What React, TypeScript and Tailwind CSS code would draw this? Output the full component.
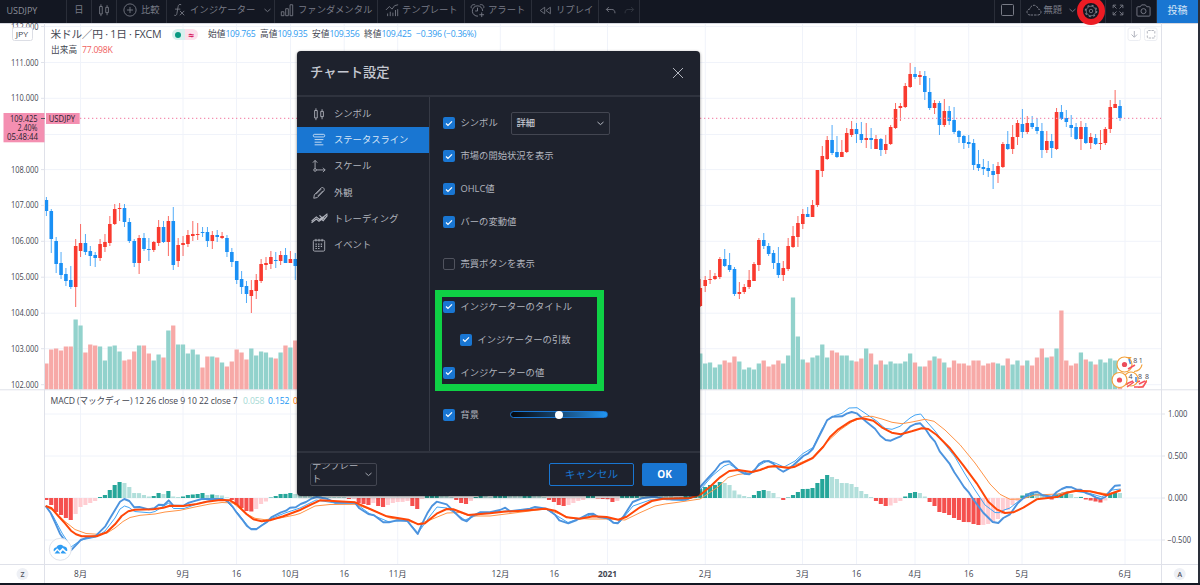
import React from "react";
import clsx from "clsx";

type Candle = [high: number, top: number, bottom: number, low: number, up: 0 | 1];

const STEP = 4.88;
const FIRST_X = 46.4;
const ZERO_Y = 498;
const VOLUME_BASE = 389.5;
const barX = (i: number) => FIRST_X + i * STEP;

const candlesLeft: Candle[] = [
  [197, 200, 211, 216, 0], [209, 211, 239, 253, 0], [237, 241, 264, 273, 0], [252, 263, 275, 279, 0],
  [268, 274, 281, 286, 0], [266, 280, 287, 289, 0], [239, 246, 287, 307, 1], [224, 243, 251, 257, 1],
  [234, 243, 252, 255, 0], [246, 251, 256, 266, 0], [252, 255, 258, 267, 0], [239, 244, 258, 261, 1],
  [234, 242, 247, 252, 1], [216, 224, 243, 246, 1], [204, 209, 224, 225, 1], [203, 208, 209, 221, 1],
  [204, 208, 222, 227, 0], [218, 222, 241, 243, 0], [239, 241, 263, 267, 0], [235, 238, 263, 274, 1],
  [233, 238, 249, 251, 0], [238, 249, 250, 261, 0], [241, 242, 250, 252, 1], [220, 227, 243, 246, 1],
  [221, 227, 242, 243, 0], [216, 221, 242, 256, 1], [207, 221, 265, 270, 0], [238, 245, 261, 267, 1],
  [236, 243, 245, 256, 1], [230, 235, 244, 247, 1], [221, 234, 236, 241, 1], [223, 234, 235, 240, 1],
  [227, 232, 233, 237, 0], [227, 232, 241, 247, 0], [231, 235, 241, 249, 1], [230, 235, 237, 242, 0],
  [232, 236, 238, 239, 1], [235, 238, 252, 257, 0], [248, 252, 262, 267, 0], [261, 261, 280, 284, 0],
  [271, 279, 287, 294, 0], [281, 286, 294, 303, 0], [280, 290, 296, 313, 1], [274, 280, 291, 299, 1],
  [259, 264, 281, 283, 1], [257, 263, 265, 270, 1], [251, 257, 264, 269, 1], [252, 260, 261, 268, 0],
  [251, 255, 261, 265, 1], [248, 255, 263, 263, 0], [251, 259, 263, 263, 1], [253, 259, 266, 280, 0],
];

const candlesRight: Candle[] = [
  [279, 288, 306, 307, 1], [276, 280, 286, 292, 1], [270, 279, 280, 284, 1], [273, 276, 279, 280, 1],
  [257, 259, 277, 279, 1], [249, 259, 266, 267, 0], [253, 265, 270, 272, 0], [267, 269, 294, 296, 0],
  [282, 292, 294, 299, 1], [284, 287, 292, 294, 1], [270, 280, 287, 289, 1], [262, 264, 281, 281, 1],
  [238, 240, 265, 271, 1], [233, 240, 246, 249, 0], [243, 246, 254, 256, 0], [250, 253, 263, 269, 0],
  [247, 263, 275, 278, 0], [261, 268, 275, 281, 1], [238, 246, 269, 271, 1], [226, 236, 247, 248, 1],
  [216, 223, 237, 247, 1], [209, 214, 224, 229, 1], [207, 214, 217, 217, 0], [200, 205, 217, 217, 1],
  [170, 170, 205, 207, 1], [146, 156, 171, 177, 1], [136, 140, 159, 160, 1], [125, 140, 153, 155, 0],
  [136, 152, 157, 158, 0], [140, 152, 157, 157, 1], [128, 133, 152, 153, 1], [121, 129, 135, 137, 1],
  [123, 129, 134, 143, 0], [122, 134, 140, 143, 0], [123, 138, 140, 148, 1], [128, 138, 140, 149, 0],
  [135, 139, 149, 149, 1], [138, 139, 150, 156, 0], [135, 144, 150, 154, 1], [125, 127, 144, 145, 1],
  [103, 109, 128, 129, 1], [103, 106, 108, 121, 1], [83, 86, 107, 108, 1], [63, 74, 87, 88, 1],
  [67, 74, 77, 79, 0], [71, 75, 77, 85, 1], [71, 76, 92, 100, 0], [78, 92, 108, 110, 0],
  [100, 103, 108, 114, 1], [101, 103, 125, 135, 0], [99, 111, 125, 127, 1], [106, 111, 121, 125, 0],
  [107, 120, 132, 134, 0], [130, 131, 137, 143, 0], [135, 136, 143, 149, 0], [135, 142, 144, 148, 0],
  [139, 143, 165, 170, 0], [150, 164, 168, 171, 0], [159, 167, 169, 175, 0], [161, 168, 171, 177, 0],
  [164, 171, 175, 189, 0], [162, 166, 174, 183, 1], [142, 144, 167, 168, 1], [131, 144, 149, 150, 0],
  [125, 137, 149, 154, 1], [120, 123, 137, 145, 1], [109, 124, 132, 138, 0], [116, 123, 132, 134, 1],
  [116, 123, 127, 129, 0], [118, 127, 131, 134, 0], [123, 131, 150, 158, 0], [131, 141, 150, 153, 1],
  [134, 141, 148, 158, 0], [108, 112, 149, 150, 1], [105, 112, 119, 120, 0], [110, 118, 122, 127, 0],
  [115, 125, 128, 137, 0], [123, 127, 139, 140, 0], [121, 127, 139, 150, 1], [123, 127, 143, 144, 0],
  [133, 137, 143, 149, 1], [134, 138, 144, 145, 0], [130, 143, 144, 150, 1], [127, 129, 143, 145, 1],
  [100, 107, 129, 133, 1], [90, 104, 108, 108, 1], [100, 106, 118, 121, 0],
];

// g = rising volume, r = falling volume
const volumeLeft = {
  start: 0,
  colors: "rrrrrrggrrrgggggrrrgrrggrgrgggggrrgrgrrrrrgggggrgrgr",
  heights: [
    26, 40, 41, 39, 43, 43, 70, 64, 37, 45, 44, 43, 29, 43, 44, 38, 29, 30, 38, 44, 44, 36, 29, 35, 32, 59, 64, 45,
    45, 36, 40, 35, 22, 33, 33, 32, 27, 23, 28, 40, 37, 30, 41, 34, 38, 37, 32, 31, 37, 44, 42, 49,
  ],
};
const volumeRight = {
  start: 134,
  colors: "gggggrrrgggggrrrrgggggrggggrrgggrrgrgrggggggrgrrgrgrrrrrrrrrrggrggrgrrrgrgrrrrgrgrggggr",
  heights: [
    36, 26, 27, 22, 25, 29, 27, 33, 28, 20, 22, 20, 26, 29, 23, 25, 29, 26, 34, 92, 53, 30, 27, 32, 34, 45, 32, 39,
    37, 34, 34, 29, 28, 31, 41, 36, 25, 29, 25, 28, 26, 26, 28, 36, 27, 23, 23, 29, 33, 31, 27, 22, 29, 26, 26, 24,
    29, 29, 24, 26, 27, 26, 24, 31, 25, 29, 24, 29, 24, 32, 41, 32, 33, 41, 79, 29, 24, 26, 37, 30, 28, 25, 30, 27,
    31, 29, 4,
  ],
};

// MACD histogram, signed height in pixels
const histogram = [
  -2, -7, -14, -17, -20, -22, -16, -9, -7, -5, -3, 1, 3, 8, 13, 16, 15, 11, 5, 4.9, 3, 1.5, 2, 5, 4, 7, 1.5, 1, 1.5,
  3, 3.5, 4, 5, 3, 3.5, 3, 2.5, 0.5, -2, -7, -10, -13, -13.5, -11, -6, -3.5, 0.5, 2, 4, 4.1, 5, 4, 4, 3, 3, 3, 2, 1,
  1, 1, 1, 1, -1, -1, -5, -6, -7, -5, -8, -9, -7, -5, -4, -3.9, -3, -8, -11, -1, 3, 5, 6, 4, 3, 1, -2, -5, -6, -3,
  1, 2, 2, 1, 2, 3, 4, 3, 2, 2, 3, 4, 3, 2, 1, -2, -4, -7, -8, -7, -5, -3, -2, 2, 3, -0.5, -1, -1.2, -4, -3, 2, 4,
  6, 8, 8, 7, 6, 5, 4, 3, 2, 1, 1, 2, 4, 6, 9, 11, 13, 13.1, 16, 15, 13, 7.5, 3.5, 2, 1, 3, 7, 8, 7, 5, 0.5, -2,
  0.5, 3, 6, 9, 9.1, 10, 15, 19, 23, 21, 19, 15, 14.9, 14, 11, 7, 4, 1, -3, -6, -8, -7.5, -5, -3, 1.5, 5, 6, 5, 1.5,
  -4, -8, -14, -15, -17, -20, -22, -24, -24.1, -26, -27, -26.9, -26, -24, -21, -16, -12, -7, -3, 2.5, 4.5, 5.5, 5,
  3.5, 1, -1.5, 3.5, 4, 5, 4, 1, 1.1, -1.5, -2.5, -3.5, -4.5, -2.5, 4, 5.5, 5,
];

const fastLine =
  "45.7,506 50.7,513 55,522.3 60,533.7 65.7,541.7 71,550.3 80.7,540 85,538.3 95.7,536 100,531.7 105.3,526.3 110,518.3 115,510 120,501.7 124.3,499 129.3,501 134.3,507.3 139.3,507 148.7,509.3 154.3,508.3 158.7,504.7 164,505 168.7,500.3 173.3,505.7 183.3,505.7 188,503 193.3,501.3 201.7,499 213.3,499 222.7,499 228,501.7 232.3,506.3 236.7,512.7 242,519.3 246.7,525.7 251.3,529.3 256.3,529.3 261.3,525.7 266.7,522.3 271.7,517 281,512.3 286,510.7 290,507.7 295.7,507.3 300.7,504 306,502 311.7,498.5 316.7,497 326.7,498.7 335,502.7 355,502.7 359.3,508.3 368.3,514 374,515.3 383.3,522.3 389,522.3 396.7,520.3 407.3,521 412.7,527.7 417.7,534 422.3,523.3 427.3,513.3 432,506 436.7,501.7 446.7,504.3 452.3,510 461.7,519.3 466.7,521.3 472.3,516 480,512.3 490,512.3 500,510 505.3,507.7 510,511.3 530,508.7 535,507 546.7,508.7 555,514.7 559.3,520.3 568.3,523.3 576.7,520 588.3,514 593.3,513.7 598.3,517 608.3,518.3 613.3,522.7 617.7,523.3 623.3,516.7 632.7,502 641.7,498.3 653.3,496.7 666.7,499.3 686.7,499.3 695,495 701,486 710,476 715,470.7 720,464 724.3,461.7 729.3,461.3 734.7,466.7 739.3,471 744.3,473.7 749.3,474.3 754,471 759,464 763.7,461.3 769,461.3 773.3,463.7 778.3,468.7 783.3,471.7 788.3,469 793.3,465.3 803.3,456 808.3,453.3 812.7,449 817.7,439 822.7,429.3 827,420.3 832.3,416.7 842,416.3 846.7,413.7 851.7,412 856.7,413.3 866.3,421.7 875,428.7 880.3,435.7 885.7,440 890.7,440.7 895.7,438.3 900.7,436.3 910.3,426.3 915.3,424 920.3,423.3 925,428.3 930,436 935,441.7 939.7,451.3 949.3,463.3 954.3,472.3 959,479.3 964,487 969,492.7 973.7,500 983.3,512.7 992.7,522 998.3,523 1003.3,518 1010,514.3 1017.7,503.3 1026.7,495 1031.7,492.7 1037.3,491.7 1042.7,495.3 1052.3,496.7 1056.7,492 1061.7,489 1066.7,487 1071.7,487.3 1076.7,489.7 1081,489.7 1086,493 1090.7,494.7 1095.7,497.3 1100.7,499 1105.3,497 1110,491 1115,485.7 1120.7,485.3";
const signalLine =
  "45.7,506 51.7,508.3 58.3,516 65,523.3 71,530.7 76,534.3 81.7,536.3 96.7,536.3 106.7,532.3 115,524.3 121.7,516 128.3,511.3 135,509.7 153.3,509.3 163.3,507.7 170,505.7 183.3,506 196.7,504 206.7,501.7 220,500 230,500.3 236.7,504.3 246.7,514.3 253.3,519.3 261.7,521.3 270,520.3 283.3,516.3 300,510 310,505 320,500.3 333.3,501 355,502.3 370,509 386.7,516.3 408.3,519.7 418.3,524.3 425,523.3 436.7,513.7 446.7,509 453.3,509.3 468.3,515 490,513.3 503.3,511.7 523.3,510.7 545,508.7 555,510.7 566.7,517.3 580,518.7 593.3,516.3 606.7,517 618.3,519.7 626.7,516.7 640,507.3 651.7,501 663.3,498.7 690,498 701,494.3 710,486.7 720,477.3 729.3,471 738.3,470 751.7,472 760,470 768.3,466.7 775,466 788.3,468 795,466.7 812.7,458 823.3,446.7 830,437 838.3,429.3 850,421.7 856.7,419 862.7,418.3 873.3,420.7 881.7,427.3 891.7,432.7 900.7,434.3 911.7,431.3 921.7,428.3 928.3,429 936.7,435 950,448.3 963.3,465.3 976.7,483.3 988.3,501.7 996.7,509.3 1005,513 1013.3,512.3 1023.3,507.7 1036.7,499.3 1050,497.7 1058.3,496.7 1066.7,492.7 1076.7,490.7 1090,491.3 1106.7,495.3 1120.7,490.3";
const thinFastLine =
  "45.7,506 53,516 62,533 71,547 81,540 96,537 105,531 115,518 120,509 124.5,506 129,507.5 134.5,511.5 150,512.8 155,511.5 162,507 168.7,503 173.5,508.5 184,508.5 200,503 212,500 225,500 237,512 250,528.5 257,528.5 270,519 285,513 300,508 316,500 335,503 355,503 370,514 388,521.5 407,520.5 418,533 430,516 437,507 447,508 465,520 480,514 505,511 520,510.5 545,508.5 568,522.5 590,515 605,518 615,523 620,522 633,506 650,500 666.7,499 672,500 685,500.7 696,496 701,489 712,476 724,466 729.3,464 740,471 749,473.5 760,465 768,460.5 775,463 784,467 795,461 803,453.5 813,447.5 822,429 827,420.5 835,415.5 842,413.3 849,408 857,407.7 867,414.5 877,421.3 885,428.3 892,429.3 900,426.3 910,418 915,415 920.7,414 927,422 935,431 944,443 955,457 965,474 975,490 985,505 995,512.5 999,512.7 1004,510 1010,508 1020,500 1033,494 1050,497 1062,493 1073,491 1090,493.5 1102,497 1112,490 1120.7,489";
const thinSignalLine =
  "45.7,506 55,512 65,521.5 75,529.5 86,533.5 98,534.3 107,533 115,528 123,521.5 130,517.5 140,515.3 155,514 165,512 180,510.3 195,507 210,504 222,502.5 233,503 245,513 255,518.3 265,519.7 280,518 295,515 300,513.5 315,506 330,504.5 355,504.3 375,511 390,518 408,521 418,524 430,520 447,513 460,512.5 470,516 490,516 510,513.5 545,509 560,514 570,518 590,519 610,519 625,520 640,512.7 655,506 665,504 675,502.7 690,500.5 700,499 706,495 718,487 728,477.5 738,474.5 752,472.7 770,467 790,467 812,458 826,443 840,430 852,421.7 864,416.7 872,416.3 882,419 892,422.3 902,423.7 912,422 925,419.3 934,421.3 945,430 960,444.7 975,463 990,484 1000,494.3 1010,499.3 1022,499 1035,495 1058,494 1075,490.3 1095,492 1108,494 1120.7,490";

const priceTicks: [string, number][] = [
  ["112.000", 26.5], ["111.000", 62.5], ["110.000", 98.3], ["", 134.5], ["108.000", 169.6], ["107.000", 205.4],
  ["106.000", 241.3], ["105.000", 277.2], ["104.000", 313.2], ["103.000", 348.7], ["102.000", 384.7],
];
const macdTicks: [string, number][] = [["1.000", 414], ["0.500", 456], ["0.000", 498], ["−0.500", 540]];
const timeTicks: [string, number][] = [
  ["8月", 80.5], ["9月", 183], ["16", 236.5], ["10月", 290.5], ["16", 344.2], ["11月", 397.7], ["12月", 500.3],
  ["16", 554.2], ["2021", 607.5], ["2月", 705.3], ["3月", 802.5], ["16", 856.5], ["4月", 915], ["16", 968.7],
  ["5月", 1022], ["6月", 1125],
];

function Candles({ data, start }: { data: Candle[]; start: number }) {
  return (
    <g>
      {data.map(([high, top, bottom, low, up], i) => {
        const x = barX(start + i);
        return (
          <g key={i} fill={up ? "#f93a2f" : "#1a90f5"}>
            <rect x={x - 0.5} y={high} width={1} height={low - high} opacity={0.75} />
            <rect x={x - 1.8} y={top} width={3.6} height={Math.max(1, bottom - top)} />
          </g>
        );
      })}
    </g>
  );
}

function Volume({ start, colors, heights }: { start: number; colors: string; heights: number[] }) {
  return (
    <g>
      {heights.map((h, i) => (
        <rect
          key={i}
          x={barX(start + i) - 2.2}
          y={VOLUME_BASE - h}
          width={4.3}
          height={h}
          fill={colors[i] === "g" ? "#92d2cc" : "#f7a9a7"}
        />
      ))}
    </g>
  );
}

function histColor(value: number, previous: number) {
  if (value >= 0) return value > previous ? "#26a69a" : "#b2dfdb";
  return value < previous ? "#f5504e" : "#ffcdd2";
}

function Chart() {
  return (
    <svg
      width="1200"
      height="562"
      viewBox="0 23 1200 562"
      className="block font-['Open_Sans','Noto_Sans_CJK_JP',sans-serif]"
    >
      <rect x="0" y="23" width="1200" height="562" fill="#fff" />
      <rect x="0" y="23" width="1200" height="1" fill="#d6d8e0" />
      <g stroke="#f0f3fa" strokeWidth="1">
        {timeTicks.map(([, x], i) => (
          <line key={i} x1={x} x2={x} y1="24" y2="564" />
        ))}
        {[...priceTicks, ...macdTicks].map(([, y], i) => (
          <line key={i} x1="45" x2="1161" y1={y} y2={y} />
        ))}
      </g>
      <g fontSize="8.2" fill="#434651">
        {priceTicks.map(([label, y]) => (
          <g key={y}>
            {label && (
              <text x="11" y={y + 3} textLength="27.5" lengthAdjust="spacingAndGlyphs">
                {label}
              </text>
            )}
            <line x1="41" x2="45" y1={y} y2={y} stroke="#e0e3eb" />
          </g>
        ))}
        {macdTicks.map(([label, y]) => (
          <g key={y}>
            <text
              x={label.startsWith("−") ? 1167.5 : 1168}
              y={y + 3}
              textLength={label.startsWith("−") ? 23.5 : 19.5}
              lengthAdjust="spacingAndGlyphs"
            >
              {label}
            </text>
            <line x1="1161" x2="1165" y1={y} y2={y} stroke="#e0e3eb" />
          </g>
        ))}
        {timeTicks.map(([label, x], i) => (
          <text key={i} x={x} y="576.5" textAnchor="middle" fontSize="8.3" fontWeight={label === "2021" ? 700 : 400}>
            {label}
          </text>
        ))}
      </g>

      <Volume {...volumeLeft} />
      <Volume {...volumeRight} />
      <Candles data={candlesLeft} start={0} />
      <Candles data={candlesRight} start={134} />
      <line x1="80" x2="1161" y1="118.4" y2="118.4" stroke="#f48fb1" strokeWidth="1.2" strokeDasharray="1.3 2.7" />

      {histogram.map((v, i) => (
        <rect
          key={i}
          x={barX(i) - 2.1}
          y={v >= 0 ? ZERO_Y - v : ZERO_Y}
          width={4.1}
          height={Math.abs(v)}
          fill={histColor(v, i === 0 ? 0 : histogram[i - 1])}
        />
      ))}
      <g fill="none" strokeLinejoin="round">
        <polyline points={thinFastLine} stroke="#42a5f5" strokeWidth="1" />
        <polyline points={thinSignalLine} stroke="#ff9447" strokeWidth="1" />
        <polyline points={fastLine} stroke="#4c93de" strokeWidth="1.9" />
        <polyline points={signalLine} stroke="#ff4708" strokeWidth="2" />
      </g>

      <g stroke="#dfe1e9">
        <line x1="0" x2="1198" y1="389.8" y2="389.8" />
        <line x1="0" x2="1198" y1="564.5" y2="564.5" />
        <line x1="44.5" x2="44.5" y1="23" y2="583" />
        <line x1="1161.5" x2="1161.5" y1="23" y2="583" />
      </g>

      {/* economic event markers */}
      <g fill="none" strokeWidth="1.2">
        <path d="M1134 371.500a8 8 0 0 0 8-7M1138 387.500a8 8 0 0 0 8.500-7.500" stroke="#f2a13b" />
        <path d="M1134 387h9l3.500-6M1132 384l8-3M1139 384l6-3" stroke="#f7525f" strokeWidth="1.5" />
        <circle cx="1131" cy="379" r="7" fill="#fff" stroke="#f2a13b" />
        <path d="M1124 385l9-4M1127 387l7-5" stroke="#f7525f" strokeWidth="1.5" />
        <path d="M1136 377v5" stroke="#4a90e2" strokeWidth="1.6" />
        <circle cx="1124.5" cy="364.500" r="7.5" fill="#fff" stroke="#f2a13b" />
        <path d="M1126 357.500h4.500l-1.500 2" stroke="#f2a13b" />
        <path d="M1129 359l1.500 5" stroke="#4a90e2" strokeWidth="1.6" />
        <path d="M1128 369l7-4" stroke="#f7525f" strokeWidth="1.5" />
        <circle cx="1119.5" cy="380" r="7.5" fill="#fff" stroke="#f2a13b" />
        <circle cx="1124.5" cy="364.5" r="2.6" fill="#eb4d5c" />
        <circle cx="1119.5" cy="380" r="2.6" fill="#eb4d5c" />
      </g>
      <g fontSize="7" fill="#434651">
        <text x="1133.3" y="362.500" letterSpacing="1.5">81</text>
        <text x="1128.5" y="378.500">4</text>
        <text x="1138" y="378.500" letterSpacing="3">88</text>
      </g>

      {/* last price tags */}
      <rect x="3.5" y="113" width="41" height="29.3" fill="#f48fb1" />
      <rect x="46" y="113" width="33.7" height="11" fill="#f48fb1" />
      <line x1="41" x2="45" y1="118.5" y2="118.5" stroke="#50535e" />
      <g fontSize="8.2" fill="#2a2330">
        <text x="10" y="121.7" textLength="27.5" lengthAdjust="spacingAndGlyphs">109.425</text>
        <text x="17.5" y="131" textLength="20" lengthAdjust="spacingAndGlyphs">2.40%</text>
        <text x="7" y="140.2" textLength="31" lengthAdjust="spacingAndGlyphs">05:48:44</text>
        <text x="48.7" y="121.5" textLength="26.5" lengthAdjust="spacingAndGlyphs">USDJPY</text>
      </g>

      <rect x="12.5" y="27.5" width="20" height="13" rx="2" fill="#fff" stroke="#dcdee5" />
      <text x="15.7" y="36.6" fontSize="8" fill="#434651" textLength="12.5" lengthAdjust="spacingAndGlyphs">JPY</text>

      {/* pane controls */}
      <g fill="#fff" stroke="#eceef3">
        <rect x="1128" y="28" width="12.5" height="12.5" rx="2" />
        <rect x="1144.5" y="28" width="12.5" height="12.5" rx="2" />
      </g>
      <g fill="none" stroke="#b2b5be">
        <path d="M1134.300 31v6M1131.500 34.500l2.800 2.800 2.800-2.800" />
        <path d="M1147.300 33.500v-2q0-1 1-1h5.500q1 0 1 1v2M1147.300 35.500v1.500q0 1 1 1h5.500q1 0 1-1v-1.500" strokeDasharray="2.500 .8" />
      </g>

      {/* cloud logo */}
      <circle cx="60.3" cy="549.3" r="11" fill="#fff" stroke="#e0e3eb" />
      <path
        d="M54 551.500c-1-2 .3-4 2.300-4 .8-3.200 5.500-4 7.500-1 2.500-.2 4 2.300 3.400 4.500h-1.200l-3.300-3.300-3 3-2.500-2.500z"
        fill="#2f9df4"
      />
      <path d="M54.500 553.500l2.800-3.300 3.200 3.300zM60.800 552.500l2-2.300 3.700 3.300h-5z" fill="#2f9df4" />

      <g textAnchor="middle" fontSize="7" fontWeight="600" fill="#50535e">
        <circle cx="22.5" cy="574" r="6" fill="#eef0f5" />
        <text x="22.5" y="576.6">Z</text>
        <circle cx="1179.7" cy="574" r="6" fill="#eef0f5" />
        <text x="1179.7" y="576.6">A</text>
      </g>

      <rect x="1198" y="23" width="2" height="562" fill="#2a2e39" />
      <rect x="0" y="583" width="1200" height="2" fill="#131722" />
    </svg>
  );
}

function Legend() {
  const ohlc = [
    ["始値", "109.765"],
    ["高値", "109.935"],
    ["安値", "109.356"],
    ["終値", "109.425"],
  ];
  return (
    <>
      <div className="absolute left-[50.5px] top-[27.5px] flex h-[14px] items-center whitespace-nowrap text-[#434651]">
        <span className="w-[121px] text-[10.7px] tracking-[-0.25px]">米ドル／円 · 1日 · FXCM</span>
        <span className="mr-[10px] flex h-[11.5px] w-[26.5px] overflow-hidden rounded-full">
          <span className="flex w-1/2 items-center justify-center bg-[#d9f0ee]">
            <span className="size-[6px] rounded-full bg-[#089981]" />
          </span>
          <span className="flex w-1/2 items-center justify-center bg-[#fce0ea] text-[10px] font-bold leading-none text-[#d81b60]">
            ≈
          </span>
        </span>
        {ohlc.map(([label, value]) => (
          <span key={label} className="w-[52px] text-[8.7px]">
            {label}
            <span className="tracking-[-0.3px] text-[#2f9bf0]">{value}</span>
          </span>
        ))}
        <span className="text-[8.7px] tracking-[-0.25px] text-[#2f9bf0]">−0.396 (−0.36%)</span>
      </div>
      <div className="absolute left-[51px] top-[44.5px] flex h-[13px] items-center gap-[5px] whitespace-nowrap text-[8.7px] text-[#434651]">
        出来高 <span className="tracking-[-0.3px] text-[#f0605e]">77.098K</span>
      </div>
      <div className="absolute left-[50.5px] top-[394.5px] flex h-[13px] items-center whitespace-nowrap text-[8.6px] text-[#434651]">
        <span className="w-[192.5px] tracking-[-0.09px]">MACD (マックディー) 12 26 close 9 10 22 close 7</span>
        <span className="w-[25px] tracking-[-0.1px] text-[#a5d9d4]">0.058</span>
        <span className="w-[25px] tracking-[-0.1px] text-[#2196f3]">0.152</span>
        <span className="text-[#ff6d00]">0.095</span>
      </div>
    </>
  );
}

function Icon({ size = 14, children, className }: { size?: number; children: React.ReactNode; className?: string }) {
  return (
    <svg
      width={size}
      height={size}
      viewBox="0 0 16 16"
      fill="none"
      stroke="currentColor"
      strokeWidth="1"
      className={clsx("shrink-0", className)}
    >
      {children}
    </svg>
  );
}

const CandleIcon = ({ size = 14 }: { size?: number }) => (
  <Icon size={size}>
    <path d="M3 4h3v8.500H3zM4.500 1.500V4M4.500 12.500V15M10 5h3v6h-3zM11.500 2.500V5M11.500 11v3" />
  </Icon>
);

const Chevron = ({ className }: { className?: string }) => (
  <svg width="7" height="5" viewBox="0 0 7 5" fill="none" stroke="currentColor" strokeWidth="0.9" className={className}>
    <path d="M.5 1l3 2.600L6.500 1" />
  </svg>
);

function Cell({ className, children }: { className?: string; children?: React.ReactNode }) {
  return (
    <div className={clsx("flex h-full shrink-0 items-center border-r border-[#2a2e39] pb-[2.5px]", className)}>
      {children}
    </div>
  );
}

function Toolbar() {
  return (
    <header className="flex h-[23px] w-full items-stretch overflow-hidden whitespace-nowrap bg-[#131722] text-[9.33px] text-[#787b86]">
      <Cell className="w-[67px] pl-[6.5px] text-[9px] text-[#8b8e98]">USDJPY</Cell>
      <Cell className="w-[25px] justify-center">日</Cell>
      <Cell className="w-[25px] justify-center">
        <CandleIcon />
      </Cell>
      <Cell className="w-[50px] gap-[4px] pl-[6px]">
        <Icon>
          <circle cx="8" cy="8" r="7" />
          <path d="M8 4.500v7M4.500 8h7" />
        </Icon>
        比較
      </Cell>
      <Cell className="w-[108px] pl-[5px]">
        <Icon className="mr-[4px]">
          <path d="M10.500 2c-2-1-3.200 0-3.500 2L5.600 12c-.3 2-1.300 2.700-3 2M3.500 7h6M9 9l5 5M14 9l-5 5" />
        </Icon>
        インジケーター
        <Chevron className="ml-[9px]" />
      </Cell>
      <Cell className="w-[103px] gap-[4px] pl-[5px]">
        <Icon>
          <path d="M1.500 10h3v4.500h-3zM6.500 6.500h3v8h-3zM11.500 2h3v12.500h-3z" />
        </Icon>
        ファンダメンタル
      </Cell>
      <Cell className="w-[87px] gap-[3px] pl-[7px]">
        <Icon>
          <path d="M1 8l4-4 3 3 3-4 4-1M3 12v3M6 10v5M9 11v4M12 8v7M14.500 7v8" />
        </Icon>
        テンプレート
      </Cell>
      <Cell className="w-[67px] gap-[3px] pl-[5px]">
        <Icon size={15}>
          <path d="M13.500 8.500A5.500 5.500 0 1 0 8.500 14M8 5v3.500H5.500M1.500 5.500c-1.200-2.500 1.500-4.500 4-3.500M14.500 5.500c1.200-2.500-1.500-4.500-4-3.500M12.500 10v5M10 12.500h5" />
        </Icon>
        アラート
      </Cell>
      <Cell className="w-[67px] gap-[4px] pl-[7px]">
        <Icon size={13}>
          <path d="M7 4v8L1.500 8zM14 4v8L8.500 8z" />
        </Icon>
        リプレイ
      </Cell>
      <Cell className="w-[41px] gap-[8px] pl-[6px]">
        <Icon size={11}>
          <path d="M5.500 3L2 6.500 5.500 10M2 6.500h8c3 0 4.500 2 4.500 5.500" strokeWidth="1.3" />
        </Icon>
        <Icon size={11} className="text-[#363a45]">
          <path d="M10.500 3L14 6.500 10.500 10M14 6.500H6c-3 0-4.500 2-4.500 5.500" strokeWidth="1.3" />
        </Icon>
      </Cell>
      <Cell className="min-w-0 flex-1" />
      <Cell className="w-[25.5px] justify-center">
        <span className="h-[12px] w-[13px] rounded-[1.5px] border border-[#787b86]" />
      </Cell>
      <Cell className="w-[85px] pl-[5px]">
        <Icon size={16} className="mr-[2px]">
          <path d="M4 13a3 3 0 0 1 0-6c1-5 7-5 8 0a3 3 0 0 1 0 6z" strokeDasharray="2.5 1" />
        </Icon>
        無題
        <Chevron className="ml-[7px]" />
      </Cell>
      <Cell className="w-[26px] justify-center">
        <Icon size={12}>
          <path
            d="M1.500 5.500v-4h4M1.500 1.500L6 6M10.500 1.500h4v4M14.500 1.500L10 6M1.500 10.500v4h4M1.500 14.500L6 10M14.500 10.500v4h-4M14.500 14.500L10 10"
            strokeWidth="1.2"
          />
        </Icon>
      </Cell>
      <Cell className="w-[25.5px] justify-center">
        <Icon size={15}>
          <path d="M2 4h2.500L6 2h4l1.500 2H14q1 0 1 1v8q0 1-1 1H2q-1 0-1-1V5q0-1 1-1z" />
          <circle cx="8" cy="8.700" r="2.700" />
        </Icon>
      </Cell>
      <button className="w-[41px] shrink-0 bg-[#1976d2] pb-[3px] text-[10px] text-[#d7e6f7]">投稿</button>
      <span className="w-[2px] shrink-0 bg-[#2a2e39]" />
    </header>
  );
}

const tabs = [
  { label: "シンボル", icon: <CandleIcon /> },
  {
    label: "ステータスライン",
    icon: (
      <Icon>
        <rect x="1.500" y="1.500" width="13" height="3" rx="1.500" />
        <path d="M3 7.500h10M3 10.500h8M3 13.500h10" />
      </Icon>
    ),
  },
  {
    label: "スケール",
    icon: (
      <Icon>
        <circle cx="3.500" cy="12.500" r="1.500" />
        <path d="M3.500 11V2M1 4.200L3.500 1.500 6 4.200M5 12.500h10M12.500 10l2.500 2.500-2.500 2.500" />
      </Icon>
    ),
  },
  {
    label: "外観",
    icon: (
      <Icon>
        <path d="M2 14l.7-4L10.500 2.200c2-1.500 4.500 1 3.200 3.200L6 13.200zM4.500 9.500l6-6M6.500 11.500l6-6" />
      </Icon>
    ),
  },
  {
    label: "トレーディング",
    icon: (
      <Icon size={17}>
        <path d="M.5 10.500l4.500-4 3 2.500 3-2.500M.5 12l4.500-3.500 2.500 2 5-3.500M8 5l2.500 2.500 5-4M9 8l2.500 2 4-5" strokeWidth="1.1" />
      </Icon>
    ),
  },
  {
    label: "イベント",
    icon: (
      <Icon>
        <rect x="1.500" y="2.500" width="13" height="12.500" rx="1.500" />
        <path d="M4.500 1v3M11.500 1v3M8 1v3" />
        <path d="M4 7h9M4 9.500h9M4 12h5.500" strokeWidth="1.3" strokeDasharray="1.500 1.500" />
      </Icon>
    ),
  },
];

function Option({
  label,
  checked = true,
  className,
  children,
}: {
  label: string;
  checked?: boolean;
  className?: string;
  children?: React.ReactNode;
}) {
  return (
    <div className={clsx("flex h-[33px] items-center", className)}>
      <span
        className={clsx(
          "mr-[5.5px] flex size-[12px] items-center justify-center rounded-[2px]",
          checked ? "bg-[#1976d2]" : "border border-[#50535e]",
        )}
      >
        {checked && (
          <svg width="8" height="7" viewBox="0 0 8 7" fill="none" stroke="#fff" strokeWidth="1.2">
            <path d="M1 3.500l2 2L7 1.300" />
          </svg>
        )}
      </span>
      <span>{label}</span>
      {children}
    </div>
  );
}

function SettingsDialog() {
  return (
    <div className="absolute left-[297px] top-[51px] flex h-[445px] w-[403px] flex-col rounded-[4px] bg-[#1e222d] text-[9.3px] text-[#b2b5be] shadow-[0_1px_3px_rgba(0,0,0,0.5)]">
      <div className="flex h-[46px] items-center justify-between border-b-2 border-[#2f333e] pl-[13px] pr-[16px]">
        <h2 className="text-[13.3px] font-medium text-[#c5c8d1]">チャート設定</h2>
        <svg width="12" height="12" viewBox="0 0 12 12" stroke="#b2b5be" fill="none">
          <path d="M1 1l10 10M11 1L1 11" />
        </svg>
      </div>

      <div className="flex h-[354px]">
        <nav className="w-[133px] border-r border-[#363a45] pt-[3.5px]">
          {tabs.map(({ label, icon }, i) => (
            <div
              key={label}
              className={clsx("flex h-[26.3px] items-center", i === 1 && "bg-[#1976d2] text-[#d7e6f7]")}
            >
              <span className="ml-[13.5px] mr-[6.5px] flex w-[17px] justify-center">{icon}</span>
              {label}
            </div>
          ))}
        </nav>
        <div className="flex-1 pl-[13px] pt-[9.5px]">
          <Option label="シンボル">
            <span className="ml-[12.8px] flex h-[23px] w-[99px] items-center justify-between rounded-[2px] border border-[#434651] pl-[5px] pr-[5px] font-medium text-[#c5c8d1]">
              詳細
              <Chevron />
            </span>
          </Option>
          <Option label="市場の開始状況を表示" />
          <Option label="OHLC値" />
          <Option label="バーの変動値" />
          <Option label="売買ボタンを表示" checked={false} className="mt-[9.3px]" />
          <Option label="インジケーターのタイトル" className="mt-[9.3px]" />
          <Option label="インジケーターの引数" className="ml-[17px]" />
          <Option label="インジケーターの値" />
          <Option label="背景" className="mt-[9.3px]">
            <span className="ml-[31px] flex h-[7px] w-[98px] items-center justify-center rounded-full border border-[#1976d2] bg-linear-to-r from-[#05080d] to-[#2196f3]">
              <span className="size-[8px] shrink-0 rounded-full bg-white" />
            </span>
          </Option>
        </div>
      </div>

      <div className="flex flex-1 items-center border-t-2 border-[#2f333e] px-[13px]">
        <div className="flex h-[23px] w-[67px] items-center overflow-hidden rounded-[2px] border border-[#434651] pl-[1px]">
          <span className="-mt-[4px] w-[50px] break-all leading-[12.5px]">テンプレート</span>
          <Chevron className="ml-[3px] shrink-0" />
        </div>
        <button className="ml-auto h-[23px] w-[85px] rounded-[2px] border border-[#1976d2] text-[10.7px] text-[#1976d2]">
          キャンセル
        </button>
        <button className="ml-[8px] h-[22.5px] w-[45px] rounded-[2px] bg-[#1976d2] text-[10px] font-bold text-white">
          OK
        </button>
      </div>
    </div>
  );
}

export default function App() {
  return (
    <div className="relative h-[585px] w-[1200px] overflow-hidden bg-white font-['Open_Sans','Noto_Sans_CJK_JP',sans-serif]">
      <Toolbar />
      <Chart />
      <Legend />
      <SettingsDialog />

      {/* annotations */}
      <div className="absolute left-[434.5px] top-[290px] h-[101px] w-[169.5px] border-[7px] border-[#0fd145]" />
      <div className="absolute left-[1077px] top-[-3px] flex size-[28px] items-center justify-center rounded-full border-[6px] border-[#ec1c24] bg-[#131722] text-[#787b86]">
        <Icon size={14}>
          <circle cx="8" cy="8" r="2" />
          <circle cx="8" cy="8" r="5.500" />
          <circle cx="8" cy="8" r="6.500" strokeWidth="1.4" strokeDasharray="2.300 2.800" />
        </Icon>
      </div>
    </div>
  );
}
